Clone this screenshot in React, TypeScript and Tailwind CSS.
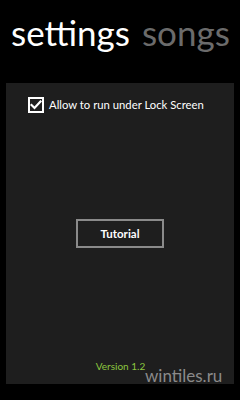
export default function App() {
  return (
    <div className="relative w-[240px] h-[400px] bg-black overflow-hidden" style={{ fontFamily: 'Lato, "Noto Sans", sans-serif' }}>
      <div className="h-[83px] pl-[11px] pt-[12px] flex items-start whitespace-nowrap">
        <span className="text-[35px] leading-[40px] text-white">settings</span>
        <span className="text-[35px] leading-[40px] text-[#6b6b6b] ml-[12px]">songs</span>
      </div>
      <div className="mx-[6px] h-[301px] bg-[#1e1e1e] flex flex-col">
        <div className="flex items-center pl-[22px] pt-[14px] whitespace-nowrap">
          <div className="w-[16px] h-[16px] border-2 border-white flex items-center justify-center">
            <svg width="12" height="10" viewBox="0 0 12 10">
              <path d="M1.5 5 L4.5 8 L10.5 1.5" stroke="white" strokeWidth="2.2" fill="none" strokeLinecap="square" />
            </svg>
          </div>
          <span className="ml-[5px] text-[11.3px] text-white">Allow to run under Lock Screen</span>
        </div>
        <div className="flex justify-center mt-[105px]">
          <div className="w-[88px] h-[29px] border-2 border-[#8a8a8a] flex items-center justify-center text-white text-[11.5px] font-bold">Tutorial</div>
        </div>
        <div className="mt-auto mb-[10px] flex justify-center">
          <span className="text-[10px] text-[#8cc63f] ml-[1px]">Version 1.2</span>
        </div>
      </div>
      <span className="absolute left-[145px] top-[366px] text-[17px] text-[#8a8a8a] leading-[20px]">wintiles.ru</span>
    </div>
  );
}
